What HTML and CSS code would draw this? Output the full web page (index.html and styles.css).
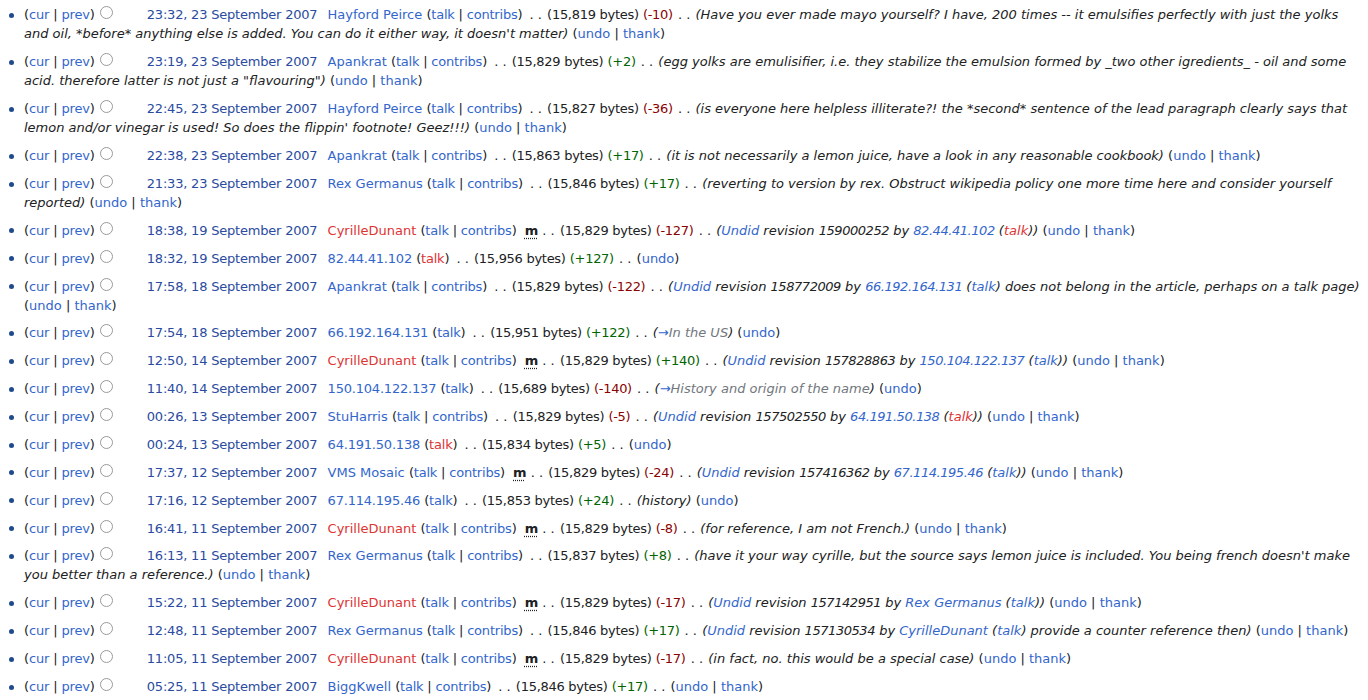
FILE: index.html
```html
<!DOCTYPE html>
<html lang="en">
<head>
<meta charset="utf-8">
<title>Mayonnaise: Revision history</title>
<link rel="stylesheet" href="styles.css">
</head>
<body>
<ul class="history">
<li class="row"><span class="hl">(<a href="#">cur</a> | <a href="#">prev</a>)</span><input type="radio" class="rb" name="o1"><a class="date" href="#">23:32, 23 September 2007</a> <a class="user" href="#">Hayford Peirce</a> <span class="tools">(<a href="#">talk</a> | <a href="#">contribs</a>)</span> <span class="sep">. .</span> <span class="size">(15,819 bytes)</span> <span class="diff neg">(-10)</span> <span class="sep">. .</span> <span class="cmt">(Have you ever made mayo yourself? I have, 200 times -- it emulsifies perfectly with just the yolks<br>and oil, *before* anything else is added. You can do it either way, it doesn't matter)</span> <span class="act">(<a href="#">undo</a> | <a href="#">thank</a>)</span></li>
<li class="row"><span class="hl">(<a href="#">cur</a> | <a href="#">prev</a>)</span><input type="radio" class="rb" name="o2"><a class="date" href="#">23:19, 23 September 2007</a> <a class="user" href="#">Apankrat</a> <span class="tools">(<a href="#">talk</a> | <a href="#">contribs</a>)</span> <span class="sep">. .</span> <span class="size">(15,829 bytes)</span> <span class="diff pos">(+2)</span> <span class="sep">. .</span> <span class="cmt">(egg yolks are emulisifier, i.e. they stabilize the emulsion formed by _two other igredients_ - oil and some<br>acid. therefore latter is not just a "flavouring")</span> <span class="act">(<a href="#">undo</a> | <a href="#">thank</a>)</span></li>
<li class="row"><span class="hl">(<a href="#">cur</a> | <a href="#">prev</a>)</span><input type="radio" class="rb" name="o3"><a class="date" href="#">22:45, 23 September 2007</a> <a class="user" href="#">Hayford Peirce</a> <span class="tools">(<a href="#">talk</a> | <a href="#">contribs</a>)</span> <span class="sep">. .</span> <span class="size">(15,827 bytes)</span> <span class="diff neg">(-36)</span> <span class="sep">. .</span> <span class="cmt">(is everyone here helpless illiterate?! the *second* sentence of the lead paragraph clearly says that<br>lemon and/or vinegar is used! So does the flippin' footnote! Geez!!!)</span> <span class="act">(<a href="#">undo</a> | <a href="#">thank</a>)</span></li>
<li class="row"><span class="hl">(<a href="#">cur</a> | <a href="#">prev</a>)</span><input type="radio" class="rb" name="o4"><a class="date" href="#">22:38, 23 September 2007</a> <a class="user" href="#">Apankrat</a> <span class="tools">(<a href="#">talk</a> | <a href="#">contribs</a>)</span> <span class="sep">. .</span> <span class="size">(15,863 bytes)</span> <span class="diff pos">(+17)</span> <span class="sep">. .</span> <span class="cmt">(it is not necessarily a lemon juice, have a look in any reasonable cookbook)</span> <span class="act">(<a href="#">undo</a> | <a href="#">thank</a>)</span></li>
<li class="row"><span class="hl">(<a href="#">cur</a> | <a href="#">prev</a>)</span><input type="radio" class="rb" name="o5"><a class="date" href="#">21:33, 23 September 2007</a> <a class="user" href="#">Rex Germanus</a> <span class="tools">(<a href="#">talk</a> | <a href="#">contribs</a>)</span> <span class="sep">. .</span> <span class="size">(15,846 bytes)</span> <span class="diff pos">(+17)</span> <span class="sep">. .</span> <span class="cmt">(reverting to version by rex. Obstruct wikipedia policy one more time here and consider yourself<br>reported)</span> <span class="act">(<a href="#">undo</a> | <a href="#">thank</a>)</span></li>
<li class="row"><span class="hl">(<a href="#">cur</a> | <a href="#">prev</a>)</span><input type="radio" class="rb" name="o6"><a class="date" href="#">18:38, 19 September 2007</a> <a class="user new" href="#">CyrilleDunant</a> <span class="tools">(<a href="#">talk</a> | <a href="#">contribs</a>)</span> <abbr class="minor" title="This is a minor edit">m</abbr> <span class="sep">. .</span> <span class="size">(15,829 bytes)</span> <span class="diff neg">(-127)</span> <span class="sep">. .</span> <span class="cmt">(<a href="#">Undid</a> revision <span class="num">159000252</span> by <a class="num" href="#">82.44.41.102</a> (<a class="new" href="#">talk</a>))</span> <span class="act">(<a href="#">undo</a> | <a href="#">thank</a>)</span></li>
<li class="row"><span class="hl">(<a href="#">cur</a> | <a href="#">prev</a>)</span><input type="radio" class="rb" name="o7"><a class="date" href="#">18:32, 19 September 2007</a> <a class="user num" href="#">82.44.41.102</a> <span class="tools">(<a class="new" href="#">talk</a>)</span> <span class="sep">. .</span> <span class="size">(15,956 bytes)</span> <span class="diff pos">(+127)</span> <span class="sep">. .</span> <span class="act">(<a href="#">undo</a>)</span></li>
<li class="row"><span class="hl">(<a href="#">cur</a> | <a href="#">prev</a>)</span><input type="radio" class="rb" name="o8"><a class="date" href="#">17:58, 18 September 2007</a> <a class="user" href="#">Apankrat</a> <span class="tools">(<a href="#">talk</a> | <a href="#">contribs</a>)</span> <span class="sep">. .</span> <span class="size">(15,829 bytes)</span> <span class="diff neg">(-122)</span> <span class="sep">. .</span> <span class="cmt">(<a href="#">Undid</a> revision <span class="num">158772009</span> by <a class="num" href="#">66.192.164.131</a> (<a href="#">talk</a>) does not belong in the article, perhaps on a talk page)</span><br><span class="act">(<a href="#">undo</a> | <a href="#">thank</a>)</span></li>
<li class="row"><span class="hl">(<a href="#">cur</a> | <a href="#">prev</a>)</span><input type="radio" class="rb" name="o9"><a class="date" href="#">17:54, 18 September 2007</a> <a class="user num" href="#">66.192.164.131</a> <span class="tools">(<a href="#">talk</a>)</span> <span class="sep">. .</span> <span class="size">(15,951 bytes)</span> <span class="diff pos">(+122)</span> <span class="sep">. .</span> <span class="cmt">(<span class="auto"><a href="#">→</a>In the US</span>)</span> <span class="act">(<a href="#">undo</a>)</span></li>
<li class="row"><span class="hl">(<a href="#">cur</a> | <a href="#">prev</a>)</span><input type="radio" class="rb" name="o10"><a class="date" href="#">12:50, 14 September 2007</a> <a class="user new" href="#">CyrilleDunant</a> <span class="tools">(<a href="#">talk</a> | <a href="#">contribs</a>)</span> <abbr class="minor" title="This is a minor edit">m</abbr> <span class="sep">. .</span> <span class="size">(15,829 bytes)</span> <span class="diff pos">(+140)</span> <span class="sep">. .</span> <span class="cmt">(<a href="#">Undid</a> revision <span class="num">157828863</span> by <a class="num" href="#">150.104.122.137</a> (<a href="#">talk</a>))</span> <span class="act">(<a href="#">undo</a> | <a href="#">thank</a>)</span></li>
<li class="row"><span class="hl">(<a href="#">cur</a> | <a href="#">prev</a>)</span><input type="radio" class="rb" name="o11"><a class="date" href="#">11:40, 14 September 2007</a> <a class="user num" href="#">150.104.122.137</a> <span class="tools">(<a href="#">talk</a>)</span> <span class="sep">. .</span> <span class="size">(15,689 bytes)</span> <span class="diff neg">(-140)</span> <span class="sep">. .</span> <span class="cmt">(<span class="auto"><a href="#">→</a>History and origin of the name</span>)</span> <span class="act">(<a href="#">undo</a>)</span></li>
<li class="row"><span class="hl">(<a href="#">cur</a> | <a href="#">prev</a>)</span><input type="radio" class="rb" name="o12"><a class="date" href="#">00:26, 13 September 2007</a> <a class="user" href="#">StuHarris</a> <span class="tools">(<a href="#">talk</a> | <a href="#">contribs</a>)</span> <span class="sep">. .</span> <span class="size">(15,829 bytes)</span> <span class="diff neg">(-5)</span> <span class="sep">. .</span> <span class="cmt">(<a href="#">Undid</a> revision <span class="num">157502550</span> by <a class="num" href="#">64.191.50.138</a> (<a class="new" href="#">talk</a>))</span> <span class="act">(<a href="#">undo</a> | <a href="#">thank</a>)</span></li>
<li class="row"><span class="hl">(<a href="#">cur</a> | <a href="#">prev</a>)</span><input type="radio" class="rb" name="o13"><a class="date" href="#">00:24, 13 September 2007</a> <a class="user num" href="#">64.191.50.138</a> <span class="tools">(<a class="new" href="#">talk</a>)</span> <span class="sep">. .</span> <span class="size">(15,834 bytes)</span> <span class="diff pos">(+5)</span> <span class="sep">. .</span> <span class="act">(<a href="#">undo</a>)</span></li>
<li class="row"><span class="hl">(<a href="#">cur</a> | <a href="#">prev</a>)</span><input type="radio" class="rb" name="o14"><a class="date" href="#">17:37, 12 September 2007</a> <a class="user" href="#">VMS Mosaic</a> <span class="tools">(<a href="#">talk</a> | <a href="#">contribs</a>)</span> <abbr class="minor" title="This is a minor edit">m</abbr> <span class="sep">. .</span> <span class="size">(15,829 bytes)</span> <span class="diff neg">(-24)</span> <span class="sep">. .</span> <span class="cmt">(<a href="#">Undid</a> revision <span class="num">157416362</span> by <a class="num" href="#">67.114.195.46</a> (<a href="#">talk</a>))</span> <span class="act">(<a href="#">undo</a> | <a href="#">thank</a>)</span></li>
<li class="row"><span class="hl">(<a href="#">cur</a> | <a href="#">prev</a>)</span><input type="radio" class="rb" name="o15"><a class="date" href="#">17:16, 12 September 2007</a> <a class="user num" href="#">67.114.195.46</a> <span class="tools">(<a href="#">talk</a>)</span> <span class="sep">. .</span> <span class="size">(15,853 bytes)</span> <span class="diff pos">(+24)</span> <span class="sep">. .</span> <span class="cmt">(history)</span> <span class="act">(<a href="#">undo</a>)</span></li>
<li class="row"><span class="hl">(<a href="#">cur</a> | <a href="#">prev</a>)</span><input type="radio" class="rb" name="o16"><a class="date" href="#">16:41, 11 September 2007</a> <a class="user new" href="#">CyrilleDunant</a> <span class="tools">(<a href="#">talk</a> | <a href="#">contribs</a>)</span> <abbr class="minor" title="This is a minor edit">m</abbr> <span class="sep">. .</span> <span class="size">(15,829 bytes)</span> <span class="diff neg">(-8)</span> <span class="sep">. .</span> <span class="cmt">(for reference, I am not French.)</span> <span class="act">(<a href="#">undo</a> | <a href="#">thank</a>)</span></li>
<li class="row"><span class="hl">(<a href="#">cur</a> | <a href="#">prev</a>)</span><input type="radio" class="rb" name="o17"><a class="date" href="#">16:13, 11 September 2007</a> <a class="user" href="#">Rex Germanus</a> <span class="tools">(<a href="#">talk</a> | <a href="#">contribs</a>)</span> <span class="sep">. .</span> <span class="size">(15,837 bytes)</span> <span class="diff pos">(+8)</span> <span class="sep">. .</span> <span class="cmt">(have it your way cyrille, but the source says lemon juice is included. You being french doesn't make<br>you better than a reference.)</span> <span class="act">(<a href="#">undo</a> | <a href="#">thank</a>)</span></li>
<li class="row"><span class="hl">(<a href="#">cur</a> | <a href="#">prev</a>)</span><input type="radio" class="rb" name="o18"><a class="date" href="#">15:22, 11 September 2007</a> <a class="user new" href="#">CyrilleDunant</a> <span class="tools">(<a href="#">talk</a> | <a href="#">contribs</a>)</span> <abbr class="minor" title="This is a minor edit">m</abbr> <span class="sep">. .</span> <span class="size">(15,829 bytes)</span> <span class="diff neg">(-17)</span> <span class="sep">. .</span> <span class="cmt">(<a href="#">Undid</a> revision <span class="num">157142951</span> by <a href="#">Rex Germanus</a> (<a href="#">talk</a>))</span> <span class="act">(<a href="#">undo</a> | <a href="#">thank</a>)</span></li>
<li class="row"><span class="hl">(<a href="#">cur</a> | <a href="#">prev</a>)</span><input type="radio" class="rb" name="o19"><a class="date" href="#">12:48, 11 September 2007</a> <a class="user" href="#">Rex Germanus</a> <span class="tools">(<a href="#">talk</a> | <a href="#">contribs</a>)</span> <span class="sep">. .</span> <span class="size">(15,846 bytes)</span> <span class="diff pos">(+17)</span> <span class="sep">. .</span> <span class="cmt">(<a href="#">Undid</a> revision <span class="num">157130534</span> by <a href="#">CyrilleDunant</a> (<a href="#">talk</a>) provide a counter reference then)</span> <span class="act">(<a href="#">undo</a> | <a href="#">thank</a>)</span></li>
<li class="row"><span class="hl">(<a href="#">cur</a> | <a href="#">prev</a>)</span><input type="radio" class="rb" name="o20"><a class="date" href="#">11:05, 11 September 2007</a> <a class="user new" href="#">CyrilleDunant</a> <span class="tools">(<a href="#">talk</a> | <a href="#">contribs</a>)</span> <abbr class="minor" title="This is a minor edit">m</abbr> <span class="sep">. .</span> <span class="size">(15,829 bytes)</span> <span class="diff neg">(-17)</span> <span class="sep">. .</span> <span class="cmt">(in fact, no. this would be a special case)</span> <span class="act">(<a href="#">undo</a> | <a href="#">thank</a>)</span></li>
<li class="row"><span class="hl">(<a href="#">cur</a> | <a href="#">prev</a>)</span><input type="radio" class="rb" name="o21"><a class="date" href="#">05:25, 11 September 2007</a> <a class="user" href="#">BiggKwell</a> <span class="tools">(<a href="#">talk</a> | <a href="#">contribs</a>)</span> <span class="sep">. .</span> <span class="size">(15,846 bytes)</span> <span class="diff pos">(+17)</span> <span class="sep">. .</span> <span class="act">(<a href="#">undo</a> | <a href="#">thank</a>)</span></li>
</ul>
</body>
</html>
```
FILE: styles.css
```css
html, body {
  margin: 0;
  padding: 0;
  background: #ffffff;
}

body {
  font-family: "DejaVu Sans", "Liberation Sans", sans-serif;
  font-size: 13px;
  line-height: 19px;
  color: #202122;
}

a {
  color: #3366cc;
  text-decoration: none;
}

a.new {
  color: #dd3333;
}

.history {
  list-style: none;
  margin: 0;
  padding: 1px 0 0 24px;
}

.row {
  position: relative;
  padding: 4.45px 0;
}

.row::before {
  content: "";
  position: absolute;
  left: -15px;
  top: 12px;
  width: 5px;
  height: 5px;
  border-radius: 50%;
  background: #1f4b8e;
}

.hl {
  letter-spacing: -0.15px;
}

.rb {
  -webkit-appearance: none;
  appearance: none;
  box-sizing: border-box;
  width: 13px;
  height: 13px;
  margin: 0 34px 0 5px;
  padding: 0;
  border: 1px solid #9a9a9a;
  border-radius: 50%;
  background: #ffffff;
  vertical-align: baseline;
}

.date {
  color: #2a4ba0;
  letter-spacing: -0.2px;
  margin-right: 6px;
}

.tools {
  letter-spacing: -0.2px;
  margin-right: 2px;
}

.minor {
  font-weight: bold;
  margin-left: 2px;
  letter-spacing: -1px;
  text-decoration: underline dotted;
  text-underline-offset: 3px;
  cursor: help;
}

.sep {
  margin: 0 1px;
}

.size {
  letter-spacing: -0.28px;
}

.diff {
  letter-spacing: -0.3px;
}

.neg {
  color: #8b0000;
}

.pos {
  color: #006400;
}

.num {
  letter-spacing: -0.2px;
}

.cmt {
  font-style: italic;
}

.cmt .num {
  letter-spacing: -0.45px;
}

.auto {
  color: #72777d;
}
```
